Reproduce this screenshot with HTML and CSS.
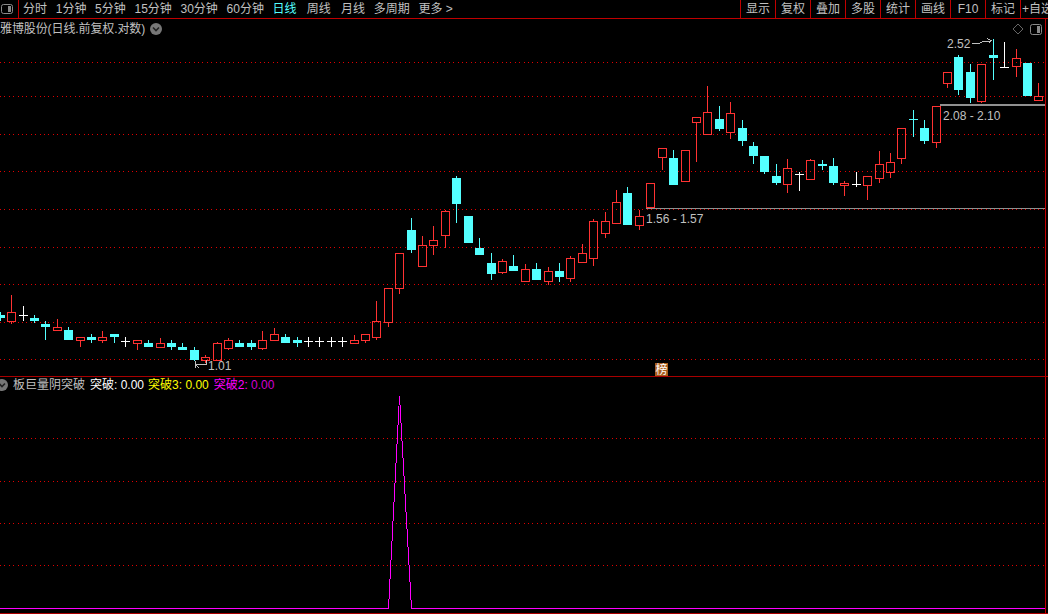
FILE: index.html
```html
<!DOCTYPE html>
<html lang="zh-CN">
<head>
<meta charset="utf-8">
<title>雅博股份</title>
<link rel="stylesheet" href="styles.css">
</head>
<body>
<div class="app">
  <header class="toolbar">
    <div class="toggle-cell">
      <svg class="pane-icon" width="12" height="10" viewBox="0 0 12 10"><rect x="0.5" y="0.5" width="11" height="9" rx="2" class="pane-frame"/><rect x="7" y="2" width="3" height="6" class="pane-fill"/></svg>
    </div>
    <nav class="periods">
      <span>分时</span><span>1分钟</span><span>5分钟</span><span>15分钟</span><span>30分钟</span><span>60分钟</span><span class="active wide">日线</span><span class="wide">周线</span><span>月线</span><span>多周期</span><span>更多 &gt;</span>
    </nav>
    <div class="tools">
      <span>显示</span><span>复权</span><span>叠加</span><span>多股</span><span>统计</span><span>画线</span><span>F10</span><span>标记</span><span class="clip">+自选</span>
    </div>
  </header>

  <section class="panel main-panel">
    <svg id="price" class="chart" width="1045" height="358" viewBox="0 19 1045 358"></svg>
    <div class="title-row">
      <span class="stock">雅博股份(日线.前复权.对数)</span>
      <svg class="chev" width="12" height="12" viewBox="0 0 12 12"><circle cx="6" cy="6" r="6" class="chev-bg"/><path d="M3 4.5 6 7.5 9 4.5" class="chev-mark"/></svg>
    </div>
    <div class="corner-icons">
      <svg width="12" height="12" viewBox="0 0 12 12"><path d="M6 1 11 6 6 11 1 6Z" class="diamond"/></svg>
      <svg width="12" height="11" viewBox="0 0 12 11"><rect x="0.5" y="0.5" width="11" height="10" rx="2" class="pane-frame"/><rect x="7" y="2" width="3" height="7" class="pane-fill"/></svg>
    </div>
    <span class="badge">榜</span>
  </section>

  <section class="panel sub-panel">
    <svg id="indicator" class="chart" width="1045" height="236" viewBox="0 378 1045 236"></svg>
    <div class="legend">
      <svg class="chev chev-left" width="12" height="12" viewBox="0 0 12 12"><circle cx="6" cy="6" r="6" class="chev-bg"/><path d="M3 4.5 6 7.5 9 4.5" class="chev-mark"/></svg>
      <span class="legend-name">板巨量阴突破</span>
      <span class="val-white">突破: 0.00</span>
      <span class="val-yellow">突破3: 0.00</span>
      <span class="val-magenta">突破2: <b>0.00</b></span>
    </div>
  </section>
</div>
<script src="chart.js"></script>
</body>
</html>
```
FILE: styles.css
```css
* { box-sizing: border-box; }
html, body { margin: 0; height: 100%; background: #000; overflow: hidden; }
body { font: 12px/1 "Liberation Sans", "Noto Sans CJK SC", sans-serif; color: #c0c0c0; }
.app { width: 1048px; height: 614px; display: flex; flex-direction: column; }

.toolbar { height: 19px; flex: none; display: flex; align-items: stretch; border-bottom: 1px solid #c00000; }
.toggle-cell { width: 19px; flex: none; display: flex; align-items: center; justify-content: flex-start; padding-left: 1px; border-right: 1px solid #c00000; }
.pane-frame { fill: none; stroke: #8a8a8a; }
.pane-fill { fill: #8a8a8a; }
.periods { flex: 1; display: flex; align-items: center; gap: 8.7px; padding-left: 4px; white-space: nowrap; }
.periods .active { color: #54ffff; }
.periods .wide { margin-right: 1.5px; }
.tools { display: flex; flex: none; width: 308px; }
.tools span { width: 35px; flex: none; display: flex; align-items: center; justify-content: center; border-left: 1px solid #c00000; white-space: nowrap; }
.tools .clip { width: 28px; justify-content: flex-start; padding-left: 1px; overflow: hidden; }

.panel { position: relative; flex: none; }
.main-panel { height: 358px; border-bottom: 1px solid #a80000; }
.sub-panel { flex: 1; }
.chart { display: block; shape-rendering: crispEdges; }
.panel::after { content: ""; position: absolute; top: 0; bottom: 0; left: 1045px; width: 1px; background: #c00000; }
.sub-panel::before { content: ""; position: absolute; left: 0; right: 0; bottom: 0; height: 1px; background: #a80000; }

.title-row { position: absolute; left: 0; top: 3px; display: flex; align-items: center; gap: 5px; height: 13px; }
.stock { white-space: nowrap; letter-spacing: -0.1px; }
.chev-bg { fill: #777; }
.chev-mark { fill: none; stroke: #222; stroke-width: 1.6; }
.corner-icons { position: absolute; left: 1012px; top: 4px; display: flex; align-items: center; gap: 6px; }
.corner-icons svg { display: block; }
.diamond { fill: none; stroke: #666; }
.badge { position: absolute; left: 655px; top: 344px; width: 13px; height: 13px; background: #a85c1c; color: #fff; display: flex; align-items: center; justify-content: center; font-size: 12px; overflow: hidden; }

.legend { position: absolute; left: 0; top: 1px; height: 14px; display: flex; align-items: center; white-space: nowrap; }
.chev-left { margin-left: -4px; flex: none; }
.legend-name { margin-left: 5px; }
.val-white { color: #fff; margin-left: 5px; }
.val-yellow { color: #ffff00; margin-left: 4px; }
.val-magenta { color: #ff00ff; margin-left: 5px; }
.val-magenta b { font-weight: normal; color: #d000d0; }

.grid { stroke: #e00000; stroke-width: 1; stroke-dasharray: 1 3.4; }
.up { stroke: #ff3232; fill: none; }
.down { stroke: #54ffff; fill: none; }
.down-body { fill: #54ffff; }
.flat { stroke: #fff; fill: none; }
.range { stroke: #909090; }
.range-bold { stroke: #909090; stroke-width: 2; }
.note { fill: #c0c0c0; font: 12px "Liberation Sans", sans-serif; shape-rendering: auto; }
.arrow { stroke: #c0c0c0; fill: none; }
.signal { stroke: #ff00ff; fill: none; }
```
FILE: chart.js
```js
// x (wick pixel), type, wick top, body top, body bottom, wick bottom
var C = [
[0,'c',312,315,318,321],[11,'r',295,312,321,324],[23,'w',306,315,315,321],[34,'c',315,318,321,323],
[45,'c',321,324,327,340],[57,'r',319,327,330,330],[68,'c',327,330,340,340],[80,'r',337,337,340,347],
[91,'c',334,337,340,343],[102,'r',331,337,340,343],[114,'c',334,334,337,343],[125,'w',337,341,341,347],
[137,'r',340,340,343,350],[148,'c',340,343,347,347],[160,'r',338,343,347,347],[171,'c',340,343,347,350],
[182,'c',343,347,350,350],[194,'c',347,350,360,361],[205,'r',355,357,360,363],[217,'r',342,343,360,360],
[228,'r',338,340,348,350],[239,'c',340,343,347,347],[251,'c',340,343,347,350],[262,'r',331,340,348,350],
[274,'r',328,334,340,340],[285,'c',334,337,343,343],[297,'c',337,340,343,347],[308,'w',337,341,341,347],
[319,'w',337,341,341,347],[331,'w',337,341,341,347],[342,'w',337,341,341,347],[354,'r',335,340,343,343],
[365,'r',334,334,340,343],[376,'r',301,321,337,340],[388,'r',288,288,322,327],[399,'r',253,253,288,294],
[411,'c',218,230,250,253],[422,'r',236,245,266,266],[433,'r',226,240,245,255],[445,'r',210,211,235,248],
[456,'c',176,178,204,223],[468,'c',216,216,243,243],[479,'c',238,248,255,255],[491,'c',253,263,274,280],
[502,'r',259,261,272,274],[513,'c',255,266,271,271],[525,'r',264,269,281,281],[536,'c',263,269,280,280],
[548,'r',267,271,281,285],[559,'c',263,271,277,282],[570,'r',256,258,278,282],[582,'r',244,253,262,263],
[593,'r',219,221,258,266],[605,'r',212,221,233,238],[616,'r',190,202,223,223],[627,'c',187,193,225,225],
[639,'r',210,216,225,230],[650,'r',183,183,207,207],[662,'r',148,148,157,170],[673,'c',150,158,185,185],
[685,'r',150,150,181,181],[696,'r',117,117,122,162],[707,'r',86,112,134,134],[719,'c',106,119,129,131],
[730,'r',102,113,132,139],[742,'c',120,128,141,146],[753,'c',142,146,156,164],[764,'c',156,156,172,174],
[776,'c',164,176,183,185],[787,'r',159,168,184,193],[799,'w',172,174,174,191],[810,'r',159,160,179,179],
[822,'c',160,164,166,170],[833,'c',158,166,183,185],[844,'r',181,183,185,196],[856,'w',172,184,184,187],
[867,'r',176,176,185,200],[879,'r',151,164,178,183],[890,'r',153,162,172,178],[901,'r',128,128,158,164],
[913,'x',110,119,119,137],[924,'c',120,128,141,144],[936,'r',106,106,142,148],[947,'r',72,72,83,88],
[958,'c',55,57,90,95],[970,'c',64,72,98,103],[981,'r',64,64,101,103],[993,'c',39,55,58,80],
[1004,'w',42,67,67,67],[1016,'r',49,58,66,77],[1027,'c',63,63,96,96],[1038,'r',83,96,100,100]
];
var NS = 'http://www.w3.org/2000/svg';
function el(parent, name, attrs, text) {
  var n = document.createElementNS(NS, name);
  for (var k in attrs) n.setAttribute(k, attrs[k]);
  if (text) n.textContent = text;
  parent.appendChild(n);
  return n;
}
function line(p, x1, y1, x2, y2, cls) { el(p, 'line', {x1: x1, y1: y1, x2: x2, y2: y2, 'class': cls}); }

var price = document.getElementById('price');
[62, 96, 134, 171, 209, 247, 284, 322, 359].forEach(function (y) { line(price, 0, y + .5, 1045, y + .5, 'grid'); });

C.forEach(function (c) {
  var x = c[0], t = c[1], wt = c[2], bt = c[3], bb = c[4], wb = c[5], m = x + .5;
  if (t === 'r') {
    if (wt < bt) line(price, m, wt, m, bt, 'up');
    if (wb > bb) line(price, m, bb + 1, m, wb, 'up');
    el(price, 'rect', {x: x - 3.5, y: bt + .5, width: 8, height: bb - bt, 'class': 'up'});
  } else if (t === 'c') {
    line(price, m, wt, m, wb, 'down');
    el(price, 'rect', {x: x - 4, y: bt, width: 9, height: bb - bt, 'class': 'down-body'});
  } else {
    var cls = t === 'x' ? 'down' : 'flat';
    line(price, m, wt, m, wb + (t === 'w' && wb === bb ? 1 : 0), cls);
    line(price, x - 4, bt + .5, x + 5, bt + .5, cls);
  }
});

line(price, 646, 208.5, 1045, 208.5, 'range');
line(price, 940, 105, 1045, 105, 'range-bold');
el(price, 'text', {x: 646, y: 223, 'class': 'note'}, '1.56 - 1.57');
el(price, 'text', {x: 943, y: 120, 'class': 'note'}, '2.08 - 2.10');
el(price, 'text', {x: 947, y: 48, 'class': 'note'}, '2.52');
el(price, 'path', {d: 'M972 43.5H979L983 41.5H991M987 38.5L991.5 40.5L989 43', 'class': 'arrow'});
el(price, 'text', {x: 208, y: 370, 'class': 'note'}, '1.01');
el(price, 'path', {d: 'M206 360V364.5H195M195 361V368M195 364.5L199 368', 'class': 'arrow'});

var ind = document.getElementById('indicator');
[439, 482, 524, 566].forEach(function (y) { line(ind, 0, y + .5, 1045, y + .5, 'grid'); });
el(ind, 'polyline', {points: '0,609.5 388.5,609.5 399.5,397 411.5,609.5 1045,609.5', 'class': 'signal'});
```
